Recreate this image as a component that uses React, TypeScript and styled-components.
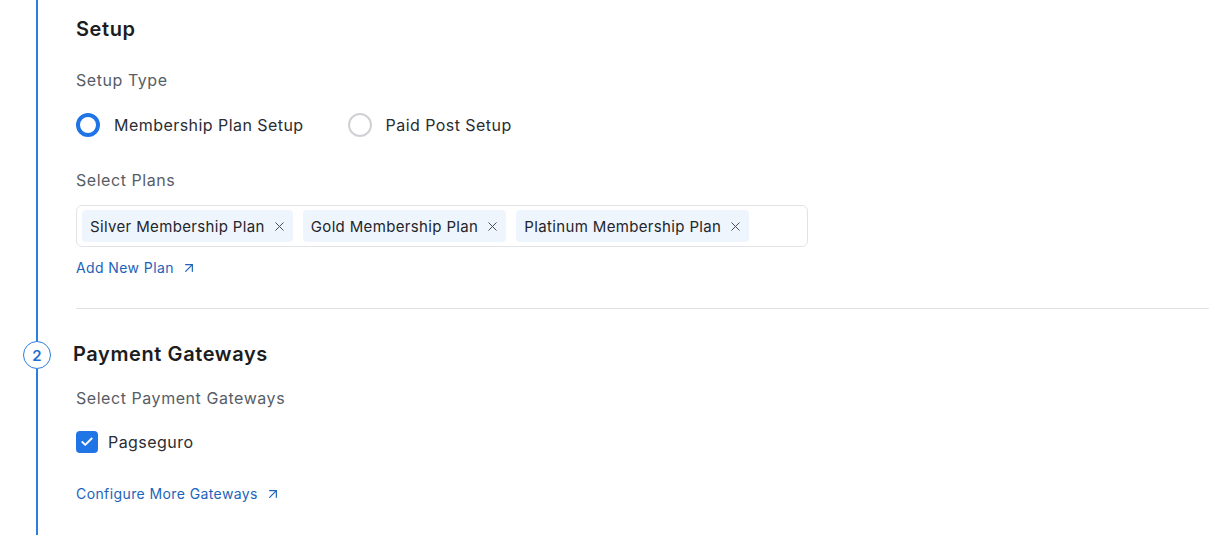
import React from 'react';
import styled, { createGlobalStyle } from 'styled-components';
import { ArrowUpRight, X, Check } from 'lucide-react';

const GlobalStyle = createGlobalStyle`
  html, body {
    margin: 0;
    padding: 0;
    background: #ffffff;
  }
  body {
    font-family: Inter, 'Noto Sans', sans-serif;
    color: #222;
    letter-spacing: 0.45px;
  }
`;

const plans = ['Silver Membership Plan', 'Gold Membership Plan', 'Platinum Membership Plan'];

const App = () => {
  return (
    <>
      <GlobalStyle />
      <Timeline>
        <Step>
          <Rail>
            <RailLine />
          </Rail>
          <StepBody $top={15}>
            <StepTitle>Setup</StepTitle>
            <FieldLabel $mt={25}>Setup Type</FieldLabel>
            <RadioGroup>
              <RadioOption>
                <RadioDot $checked />
                Membership Plan Setup
              </RadioOption>
              <RadioOption>
                <RadioDot />
                Paid Post Setup
              </RadioOption>
            </RadioGroup>
            <FieldLabel $mt={31}>Select Plans</FieldLabel>
            <TagInput>
              {plans.map((p) => (
                <Chip key={p}>
                  {p}
                  <X size={15} strokeWidth={1.6} color="#4a4f57" />
                </Chip>
              ))}
            </TagInput>
            <LinkText $mt={11}>
              Add New Plan <ArrowUpRight size={16} strokeWidth={1.8} />
            </LinkText>
            <Divider />
          </StepBody>
        </Step>
        <Step $grow>
          <Rail>
            <RailLine $fixed={32} />
            <Marker>2</Marker>
            <RailLine />
          </Rail>
          <StepBody $top={31}>
            <StepTitle $shift={-3}>Payment Gateways</StepTitle>
            <FieldLabel $mt={18}>Select Payment Gateways</FieldLabel>
            <CheckRow>
              <CheckBox>
                <Check size={14} strokeWidth={3.2} color="#fff" />
              </CheckBox>
              Pagseguro
            </CheckRow>
            <LinkText $mt={30}>
              Configure More Gateways <ArrowUpRight size={16} strokeWidth={1.8} />
            </LinkText>
          </StepBody>
        </Step>
      </Timeline>
    </>
  );
};

const Timeline = styled.div`
  display: flex;
  flex-direction: column;
  min-height: 535px;
`;

const Step = styled.div<{ $grow?: boolean }>`
  display: grid;
  grid-template-columns: 76px 1fr;
  flex: ${(p) => (p.$grow ? '1 1 auto' : '0 0 auto')};
`;

const Rail = styled.div`
  display: flex;
  flex-direction: column;
  align-items: center;
  padding-right: 2px;
`;

const RailLine = styled.div<{ $fixed?: number }>`
  width: 1.5px;
  background: #2b7de0;
  ${(p) => (p.$fixed !== undefined ? `height: ${p.$fixed}px;` : 'flex: 1;')}
`;

const Marker = styled.div`
  box-sizing: border-box;
  width: 28px;
  height: 28px;
  border: 1.5px solid #2b7de0;
  border-radius: 50%;
  display: flex;
  align-items: center;
  justify-content: center;
  color: #1f6fd1;
  font-size: 15px;
  font-weight: 600;
  letter-spacing: 0;
  background: #fff;
`;

const StepBody = styled.div<{ $top: number }>`
  display: flex;
  flex-direction: column;
  align-items: flex-start;
  padding-top: ${(p) => p.$top}px;
`;

const StepTitle = styled.h2<{ $shift?: number }>`
  margin: 0 0 0 ${(p) => p.$shift ?? 0}px;
  font-size: 20px;
  line-height: 28px;
  font-weight: 600;
  letter-spacing: 0.6px;
  color: #1b1d21;
`;

const FieldLabel = styled.div<{ $mt: number }>`
  margin-top: ${(p) => p.$mt}px;
  font-size: 16px;
  line-height: 24px;
  letter-spacing: 0.55px;
  color: #575d66;
`;

const RadioGroup = styled.div`
  display: flex;
  gap: 44px;
  margin-top: 21px;
`;

const RadioOption = styled.label`
  display: flex;
  align-items: center;
  gap: 14px;
  font-size: 16px;
  line-height: 24px;
  color: #2a2d33;
`;

const RadioDot = styled.span<{ $checked?: boolean }>`
  box-sizing: border-box;
  width: 24px;
  height: 24px;
  border-radius: 50%;
  border: ${(p) => (p.$checked ? '4px solid #1f74e6' : '2px solid #cfd1d4')};
  background: #fff;
`;

const TagInput = styled.div`
  box-sizing: border-box;
  margin-top: 13px;
  width: 732px;
  height: 42px;
  border: 1px solid #e1e3e7;
  border-radius: 6px;
  padding: 4px 5px;
  display: flex;
  align-items: center;
  gap: 10px;
`;

const Chip = styled.span`
  display: flex;
  align-items: center;
  gap: 7px;
  height: 32px;
  padding: 0 6px 0 8px;
  border-radius: 4px;
  background: #eff5fd;
  font-size: 15px;
  letter-spacing: 0.35px;
  color: #23262b;
`;

const LinkText = styled.a<{ $mt: number }>`
  margin-top: ${(p) => p.$mt}px;
  display: flex;
  align-items: center;
  gap: 7px;
  font-size: 14px;
  line-height: 20px;
  letter-spacing: 0.4px;
  color: #1c63b9;
  cursor: pointer;
`;

const Divider = styled.hr`
  align-self: stretch;
  margin: 30px 0 0 0;
  border: none;
  border-top: 1px solid #e2e2e2;
`;

const CheckRow = styled.label`
  display: flex;
  align-items: center;
  gap: 10px;
  margin-top: 20px;
  font-size: 16px;
  line-height: 24px;
  color: #2a2d33;
`;

const CheckBox = styled.span`
  width: 22px;
  height: 22px;
  border-radius: 4px;
  background: #1f74e6;
  display: flex;
  align-items: center;
  justify-content: center;
`;

export default App;
